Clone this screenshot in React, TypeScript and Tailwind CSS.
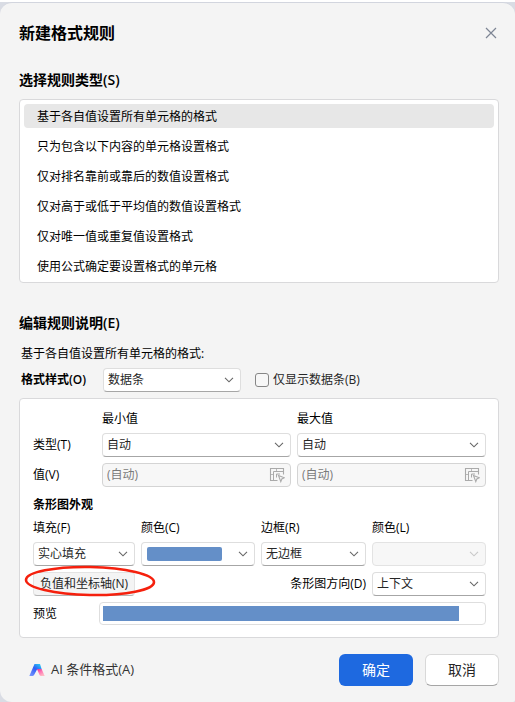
import React, { useState } from 'react';
import clsx from 'clsx';

const RULE_TYPES = [
    '基于各自值设置所有单元格的格式',
    '只为包含以下内容的单元格设置格式',
    '仅对排名靠前或靠后的数值设置格式',
    '仅对高于或低于平均值的数值设置格式',
    '仅对唯一值或重复值设置格式',
    '使用公式确定要设置格式的单元格',
];

const ChevronIcon: React.FC<{ className?: string }> = ({ className }) => (
    <svg viewBox="0 0 10 6" className={clsx('pointer-events-none absolute right-[7px] top-[9px] h-1.5 w-2.5', className)} fill="none" stroke="currentColor" strokeWidth="1.1" aria-hidden="true">
        <path d="M1 0.8 L5 4.8 L9 0.8" />
    </svg>
);

const RangeIcon: React.FC = () => (
    <svg viewBox="0 0 16 16" className="pointer-events-none absolute right-1.5 top-1 h-4 w-4 text-[#aaaaaa]" fill="none" stroke="currentColor" aria-hidden="true">
        <path d="M8.5 13.5 H1.5 V1.5 H14.5 V7.5" strokeWidth="1.1" />
        <path d="M4.5 13.5 V4.5 H14.5 M7.5 10.5 V7 H11" strokeWidth="1" />
        <path d="M7.5 1.5 V4.5 M1.5 7.5 H4.5" strokeWidth="0.8" />
        <path d="M9.5 8.5 L15.3 10.8 L12.8 12 L11.8 14.6 Z" fill="#f7f7f7" strokeWidth="1.1" />
    </svg>
);

const LogoIcon: React.FC = () => (
    <svg viewBox="0 0 16 12" className="h-3 w-4" aria-hidden="true">
        <defs>
            <linearGradient id="logo-blue" x1="0.8" y1="0" x2="0" y2="1">
                <stop offset="0" stopColor="#27c4f5" />
                <stop offset="0.4" stopColor="#2f5cf6" />
                <stop offset="1" stopColor="#7f9cff" />
            </linearGradient>
            <linearGradient id="logo-pink" x1="0" y1="0" x2="0.6" y2="1">
                <stop offset="0" stopColor="#e2309a" />
                <stop offset="0.5" stopColor="#ff74b4" />
                <stop offset="1" stopColor="#ffb9c4" />
            </linearGradient>
        </defs>
        <path d="M5.5 0 H11 L12.8 5.5 H8 L5.2 10.8 Q4.5 12 3.2 12 H0.3 Z" fill="url(#logo-blue)" />
        <path d="M8 5 H12.6 L15.7 12 H12.2 Q11 12 10.4 10.8 Z" fill="url(#logo-pink)" />
    </svg>
);

interface SelectFieldProps {
    id: string;
    value?: string;
    label?: string;
    disabled?: boolean;
    className?: string;
    children?: React.ReactNode;
}

const SelectField: React.FC<SelectFieldProps> = ({ id, value = '', label, disabled, className, children }) => (
    <div className={clsx('relative', className)}>
        <select
            id={id}
            aria-label={label}
            disabled={disabled}
            className={clsx(
                'block h-6 w-full appearance-none rounded border pl-1 pr-5 text-xs leading-[22px]',
                disabled ? 'border-[#e3e3e3] bg-[#f7f7f7]' : 'border-[#dedede] border-b-[#a6a6a6] bg-white text-[#262626]'
            )}
        >
            <option>{value}</option>
        </select>
        {children}
        <ChevronIcon className={disabled ? 'text-[#c8c8c8]' : 'text-[#666666]'} />
    </div>
);

const RangeField: React.FC<{ label: string }> = ({ label }) => (
    <div className="relative">
        <input
            type="text"
            aria-label={label}
            value="(自动)"
            readOnly
            disabled
            className="block h-6 w-full rounded border border-[#d4d4d4] bg-[#f7f7f7] pb-0.5 pl-1 pr-6 text-xs text-[#7a7a7a]"
        />
        <RangeIcon />
    </div>
);

const App: React.FC = () => {
    const [selected, setSelected] = useState(0);
    const [barOnly, setBarOnly] = useState(false);

    return (
        <div className="min-h-screen border-t-2 border-white bg-[#d9dce4] font-['Open_Sans','Noto_Sans_CJK_SC',sans-serif] text-xs text-black">
            <div role="dialog" aria-labelledby="dialog-title" className="rounded-xl rounded-br-xs border-t border-[#d2d5de] bg-[#f4f4f4] px-4 pb-4 pl-[19px]">
                <header className="flex h-[60px] items-center justify-between">
                    <h1 id="dialog-title" className="text-base font-semibold leading-6">新建格式规则</h1>
                    <button type="button" aria-label="关闭" className="p-0.5">
                        <svg viewBox="0 0 12 12" className="h-3 w-3" fill="none" stroke="#7d8594" strokeWidth="1.2" aria-hidden="true">
                            <path d="M1 1 L11 11 M11 1 L1 11" />
                        </svg>
                    </button>
                </header>

                <h2 id="rule-type" className="mt-[7px] text-sm font-semibold leading-5">选择规则类型(S)</h2>
                <ul role="listbox" aria-labelledby="rule-type" className="mt-[9px] flex flex-col gap-1.5 rounded border border-[#d9d9db] bg-white p-1">
                    {RULE_TYPES.map((rule, i) => (
                        <li key={rule} role="option" aria-selected={i === selected}>
                            <button
                                type="button"
                                onClick={() => setSelected(i)}
                                className={clsx('block h-6 w-full rounded pl-[13px] text-left leading-[26px]', i === selected && 'bg-[#e7e7e7]')}
                            >
                                {rule}
                            </button>
                        </li>
                    ))}
                </ul>

                <h2 className="mt-[30px] text-sm font-semibold leading-5">编辑规则说明(E)</h2>
                <p className="mt-[13px] pl-0.5 leading-4">基于各自值设置所有单元格的格式:</p>
                <div className="mt-1.5 flex items-center pl-0.5">
                    <label htmlFor="format-style" className="w-[82px] font-semibold">格式样式(O)</label>
                    <SelectField id="format-style" value="数据条" className="w-[138px]" />
                    <label className="ml-3.5 flex items-center gap-1 text-[#262626]">
                        <input
                            type="checkbox"
                            checked={barOnly}
                            onChange={(e) => setBarOnly(e.target.checked)}
                            className="h-3.5 w-3.5 appearance-none rounded-[3px] border border-[#868686] bg-[#f7f7f7] checked:bg-[#1e69e0]"
                        />
                        仅显示数据条(B)
                    </label>
                </div>

                <section className="mt-1.5 rounded border border-[#d9d9db] bg-white pb-3 pl-[13px] pr-3 pt-3">
                    <div className="grid grid-cols-[63px_1fr_1fr] items-center gap-x-1.5">
                        <span className="col-start-2 leading-4">最小值</span>
                        <span className="leading-4">最大值</span>
                        <label htmlFor="type-min" className="mt-1.5">类型(T)</label>
                        <SelectField id="type-min" value="自动" className="mt-1.5" />
                        <SelectField id="type-max" value="自动" label="最大值 类型" className="mt-1.5" />
                    </div>
                    <div className="mt-1.5 grid grid-cols-[63px_1fr_1fr] items-center gap-x-1.5">
                        <span>值(V)</span>
                        <RangeField label="最小值" />
                        <RangeField label="最大值" />
                    </div>

                    <h3 className="mt-2.5 font-semibold leading-4">条形图外观</h3>
                    <div className="mt-[7px] grid grid-cols-[102fr_114fr_105fr_114fr] gap-1.5">
                        <label htmlFor="fill" className="leading-4">填充(F)</label>
                        <label htmlFor="fill-color" className="leading-4">颜色(C)</label>
                        <label htmlFor="border" className="leading-4">边框(R)</label>
                        <label htmlFor="border-color" className="leading-4">颜色(L)</label>
                        <SelectField id="fill" value="实心填充" />
                        <SelectField id="fill-color">
                            <span className="pointer-events-none absolute left-1.5 right-[33px] top-[5px] h-3.5 rounded-xs bg-[#648fc8]" />
                        </SelectField>
                        <SelectField id="border" value="无边框" />
                        <SelectField id="border-color" disabled />
                        <div className="relative">
                            <button type="button" className="block h-6 w-full rounded border border-[#e3e3e3] border-b-[#b5b5b5] bg-[#f4f4f4] leading-[22px] text-[#262626]">
                                负值和坐标轴(N)
                            </button>
                            <svg viewBox="0 0 132 32" className="pointer-events-none absolute -left-[9px] -top-[7px] h-8 w-[132px] max-w-none" fill="none" stroke="#f5200d" strokeWidth="2.6" aria-hidden="true">
                                <ellipse cx="66" cy="16" rx="64" ry="14" transform="rotate(1 66 16)" />
                            </svg>
                        </div>
                        <label htmlFor="direction" className="col-span-2 text-right leading-6">条形图方向(D)</label>
                        <SelectField id="direction" value="上下文" />
                    </div>
                    <div className="mt-1.5 flex items-center">
                        <span className="w-[66px]">预览</span>
                        <div className="h-[23px] flex-1 rounded border border-[#dedede] bg-white px-[3px] py-[3px]">
                            <div className="h-[15px] w-[94%] bg-[#648fc8]" />
                        </div>
                    </div>
                </section>

                <footer className="mt-4 flex items-center gap-3">
                    <button type="button" className="mr-auto flex items-center gap-1.5 pl-2.5 text-[13px] text-[#333333]">
                        <LogoIcon />
                        AI 条件格式(A)
                    </button>
                    <button type="button" className="h-8 w-[74px] rounded-md bg-[#1e69e0] text-sm text-white">确定</button>
                    <button type="button" className="h-8 w-[74px] rounded-md border border-[#d9d9d9] border-b-[#a6a6a6] bg-white text-sm text-[#262626]">取消</button>
                </footer>
            </div>
        </div>
    );
};

export default App;
